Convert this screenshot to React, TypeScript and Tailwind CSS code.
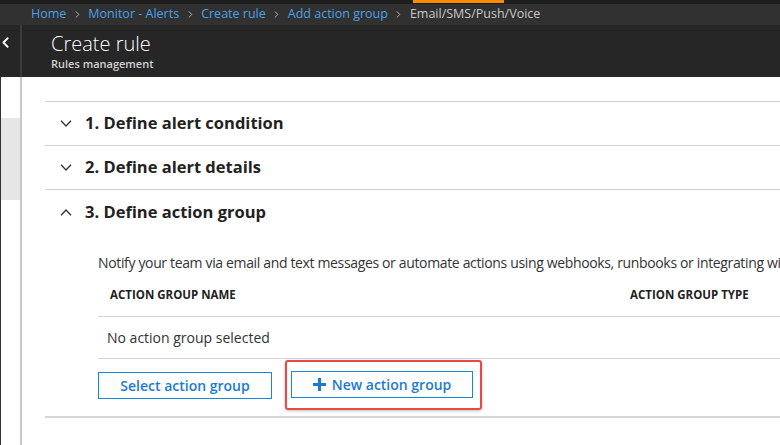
import { ChevronLeft, ChevronRight } from "lucide-react";

const crumbs = ["Home", "Monitor - Alerts", "Create rule", "Add action group"];

function Chevron({ up }: { up?: boolean }) {
	return (
		<svg width="12" height="7" viewBox="0 0 12 7" className="text-[#333]" fill="none">
			<polyline
				points={up ? "1,6.2 6,1 11,6.2" : "1,0.8 6,6 11,0.8"}
				stroke="currentColor"
				strokeWidth="1.3"
			/>
		</svg>
	);
}

function Section({ title, open }: { title: string; open?: boolean }) {
	return (
		<div className={`flex h-[44px] items-center gap-[13px] pl-[15px] ${open ? "" : "border-b border-[#d4d4d4]"}`}>
			<Chevron up={open} />
			<span className="text-[16.5px] font-bold text-[#222]">{title}</span>
		</div>
	);
}

export default function App() {
	return (
		<div className="flex h-[445px] w-[780px] flex-col overflow-hidden bg-white font-['Open_Sans',sans-serif]">
			<div className="flex h-[4px] shrink-0 bg-[#1e1e1e]">
				<div className="ml-[413px] h-[3px] w-[91px] bg-[#ff8c00]" />
			</div>
			<div className="flex h-[21px] shrink-0 items-center bg-[#313131] pl-[31px] text-[12.5px]">
				{crumbs.map((c) => (
					<span key={c} className="flex items-center">
						<span className="text-[#4aa0e6]">{c}</span>
						<ChevronRight className="mx-[5.5px] size-[11px] text-[#bbb]" strokeWidth={2} />
					</span>
				))}
				<span className="text-[#c8c8c8]">Email/SMS/Push/Voice</span>
			</div>
			<div className="flex h-[52px] shrink-0 bg-[#262626]">
				<div className="flex w-[20px] items-start pt-[9px]">
					<ChevronLeft className="-ml-[3px] size-[17px] text-white" strokeWidth={2.6} />
				</div>
				<div className="w-[2px] bg-[#3c3c3c]" />
				<div className="flex flex-col pl-[29px] pt-[6px]">
					<span className="text-[20px] font-light leading-[26px] text-white">Create rule</span>
					<span className="text-[11px] font-semibold leading-[14px] text-[#d0d0d0]">Rules management</span>
				</div>
			</div>
			<div className="flex min-h-0 flex-1">
				<div className="flex w-[20px] shrink-0 flex-col border-l border-[#333]">
					<div className="mt-[41px] h-[82px] bg-[#e6e6e6]" />
				</div>
				<div className="w-[2px] shrink-0 bg-[#c8c8c8]" />
				<div className="flex min-w-0 flex-1 flex-col pl-[23px] pt-[24px]">
					<div className="border-t border-[#d4d4d4]">
						<Section title="1. Define alert condition" />
						<Section title="2. Define alert details" />
						<Section title="3. Define action group" open />
					</div>
					<div className="flex flex-col border-b-2 border-[#d6d6d6] pb-[6px] pl-[53px] pt-[19px]">
						<p className="overflow-hidden whitespace-nowrap text-[14px] leading-[20px] tracking-[-0.35px] text-[#333]">
							Notify your team via email and text messages or automate actions using webhooks, runbooks or integrating with ITSM
						</p>
						<div className="flex h-[44px] items-center border-b border-[#d4d4d4] text-[11.5px] font-bold text-[#222]">
							<span className="w-[532px] pl-[12px]">ACTION GROUP NAME</span>
							<span>ACTION GROUP TYPE</span>
						</div>
						<div className="flex h-[42px] items-center border-b border-[#d4d4d4] pl-[9px] text-[14px] text-[#333]">
							No action group selected
						</div>
						<div className="flex items-center gap-[13px] pt-[1px]">
							<button className="h-[27px] w-[174px] border border-[#1a86d9] text-[14px] font-semibold text-[#1a7ad0]">
								Select action group
							</button>
							<div className="rounded-[3px] border-2 border-[#e84848] pb-[10px] pl-[4px] pr-[7px] pt-[9px] shadow-[0_1px_3px_rgba(0,0,0,0.25)]">
								<button className="flex h-[27px] w-[182px] items-center justify-center gap-[6px] border border-[#1a86d9] text-[14px] font-semibold text-[#1a7ad0]">
									<svg width="13" height="13" viewBox="0 0 13 13" fill="currentColor">
										<rect x="5" y="0" width="3" height="13" />
										<rect x="0" y="5" width="13" height="3" />
									</svg>
									New action group
								</button>
							</div>
						</div>
					</div>
				</div>
			</div>
		</div>
	);
}
